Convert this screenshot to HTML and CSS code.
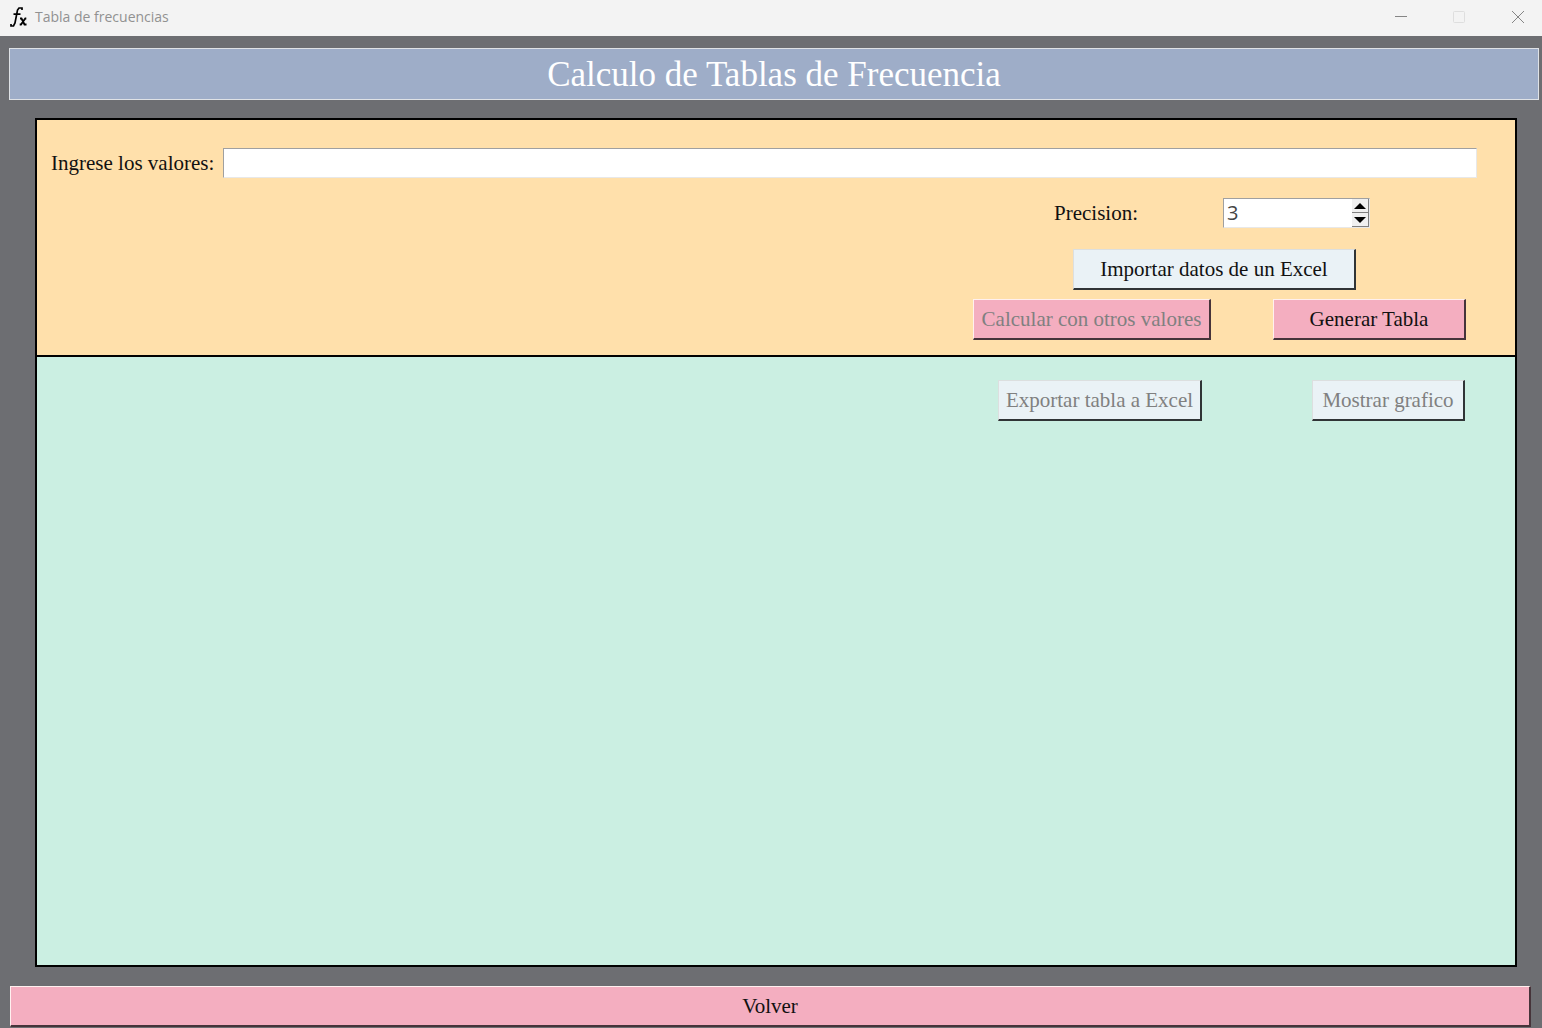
FILE: index.html
```html
<!DOCTYPE html>
<html lang="es">
<head>
<meta charset="utf-8">
<title>Tabla de frecuencias</title>
<link rel="stylesheet" href="styles.css">
</head>
<body>
<header class="titlebar">
  <svg class="app-icon" viewBox="0 0 18 22" aria-hidden="true">
    <path d="M13 4V2H10L8.500 4 6 17 4.500 20H2V18M4.500 8.200H11.500" fill="none" stroke="#000" stroke-width="1.700"/>
    <path d="M11 12.500H12.500L15.500 18.500H17.500M17.300 12.500H16.300L12 18.500H10.700" fill="none" stroke="#000" stroke-width="1.800"/>
  </svg>
  <span class="window-title">Tabla de frecuencias</span>
  <div class="window-controls">
    <button class="window-button" type="button" aria-label="Minimizar"><svg viewBox="0 0 14 14"><path d="M1 6.500H13"/></svg></button>
    <button class="window-button" type="button" aria-label="Maximizar" disabled><svg viewBox="0 0 14 14"><rect x="1.500" y="1.500" width="11" height="11" rx="1"/></svg></button>
    <button class="window-button" type="button" aria-label="Cerrar"><svg viewBox="0 0 14 14"><path d="M1 1L13 13M13 1L1 13"/></svg></button>
  </div>
</header>
<main class="window">
  <h1 class="heading">Calculo de Tablas de Frecuencia</h1>
  <div class="panel">
    <form class="inputs">
      <div class="row values-row">
        <label for="valores">Ingrese los valores:</label>
        <input class="field values" id="valores" type="text">
      </div>
      <div class="row precision-row">
        <label for="precision">Precision:</label>
        <div class="field spinbox">
          <input class="spin-value" id="precision" type="number" value="3">
          <div class="spin-arrows">
            <button class="spin-button" type="button" aria-label="Aumentar"><svg viewBox="0 0 12 6"><path d="M0 6L6 0L12 6Z"/></svg></button>
            <button class="spin-button" type="button" aria-label="Disminuir"><svg viewBox="0 0 12 6"><path d="M0 0H12L6 6Z"/></svg></button>
          </div>
        </div>
      </div>
      <div class="row import-row">
        <button class="button pale import" type="button">Importar datos de un Excel</button>
      </div>
      <div class="row action-row">
        <button class="button pink recalc" type="button" disabled>Calcular con otros valores</button>
        <button class="button pink generate" type="button">Generar Tabla</button>
      </div>
    </form>
    <section class="results">
      <button class="button pale export" type="button" disabled>Exportar tabla a Excel</button>
      <button class="button pale chart" type="button" disabled>Mostrar grafico</button>
    </section>
  </div>
  <button class="button pink back" type="button">Volver</button>
</main>
</body>
</html>
```
FILE: styles.css
```css
* { box-sizing: border-box; }

body {
  display: flex;
  flex-direction: column;
  min-height: 100vh;
  margin: 0;
  background: #6d6e72;
  color: #111;
  font: 21px/24px "Liberation Serif", "Times New Roman", serif;
}

button, input { font: inherit; color: inherit; }

.titlebar {
  display: flex;
  align-items: center;
  height: 36px;
  padding: 0 0 2px 9px;
  background: #f3f3f3;
}

.app-icon { width: 18px; height: 22px; margin-right: 8px; }

.window-title {
  color: #919191;
  font: 14px/20px "Open Sans", "Noto Sans", sans-serif;
}

.window-controls { display: flex; margin-left: auto; }

.window-button {
  display: flex;
  align-items: center;
  justify-content: center;
  width: 58px;
  height: 34px;
  padding: 0;
  border: 0;
  background: none;
  color: #858585;
}

.window-button:last-child { width: 54px; padding-left: 6px; }
.window-button:disabled { color: #dedede; }
.window-button svg { width: 14px; height: 14px; fill: none; stroke: currentColor; }

.window {
  display: flex;
  flex: 1;
  flex-direction: column;
  padding: 12px 0 1px;
}

.heading {
  margin: 0 3px 18px 9px;
  padding: 6px 0 4px;
  border: 1px solid #dfe2e6;
  background: #9eadc8;
  color: #fff;
  font-size: 35px;
  font-weight: 400;
  line-height: 40px;
  text-align: center;
}

.panel {
  display: flex;
  flex: 1;
  flex-direction: column;
  margin: 0 25px 19px 35px;
  border: 2px solid #000;
}

.inputs {
  padding: 28px 38px 15px 14px;
  border-bottom: 2px solid #000;
  background: #ffe0ab;
}

.row { display: flex; align-items: center; justify-content: flex-end; }

.field {
  height: 30px;
  border: 1px solid;
  border-color: #a0a0a0 #e8e8e8 #e8e8e8 #a0a0a0;
  background: #fff;
}

.values-row { gap: 9px; margin-bottom: 20px; }
.values { flex: 1; min-width: 0; padding: 0 3px; border-radius: 0; }

.precision-row { gap: 85px; margin-bottom: 21px; padding-right: 107px; }
.spinbox { display: flex; width: 147px; }

.spin-value {
  flex: 1;
  min-width: 0;
  padding: 0 3px;
  border: 0;
  background: none;
  color: #444;
  font: 20px/28px "Open Sans", "Noto Sans", sans-serif;
  appearance: textfield;
}

.spin-value::-webkit-inner-spin-button { appearance: none; }

.spin-arrows { display: flex; flex-direction: column; width: 17px; }

.spin-button {
  display: flex;
  flex: 1;
  align-items: center;
  justify-content: center;
  padding: 0;
  border: solid #808080;
  border-width: 0 1px 1px 0;
  background: #f0f0f0;
}

.spin-button svg { width: 12px; height: 6px; fill: #000; }

.button {
  height: 41px;
  padding: 0;
  border: solid;
  border-width: 1px 2px 2px 1px;
  border-radius: 0;
  white-space: nowrap;
}

.button:disabled { color: #808080; }

.pink {
  border-color: #fff0ef #46343a #46343a #fff0ef;
  background: #f4aec0;
}

.pale {
  border-color: #dcdfdf #303436 #303436 #dcdfdf;
  background: #eaf2f6;
}

.import-row { margin-bottom: 9px; padding-right: 121px; }
.import { width: 283px; }

.action-row { gap: 62px; padding-right: 11px; }
.recalc { width: 238px; }
.generate { width: 193px; }

.results {
  display: flex;
  flex: 1;
  align-items: flex-start;
  justify-content: flex-end;
  gap: 110px;
  padding: 23px 50px 23px 14px;
  background: #cbefe2;
}

.export { width: 204px; }
.chart { width: 153px; }

.back { margin: 0 11px 0 10px; }
```
